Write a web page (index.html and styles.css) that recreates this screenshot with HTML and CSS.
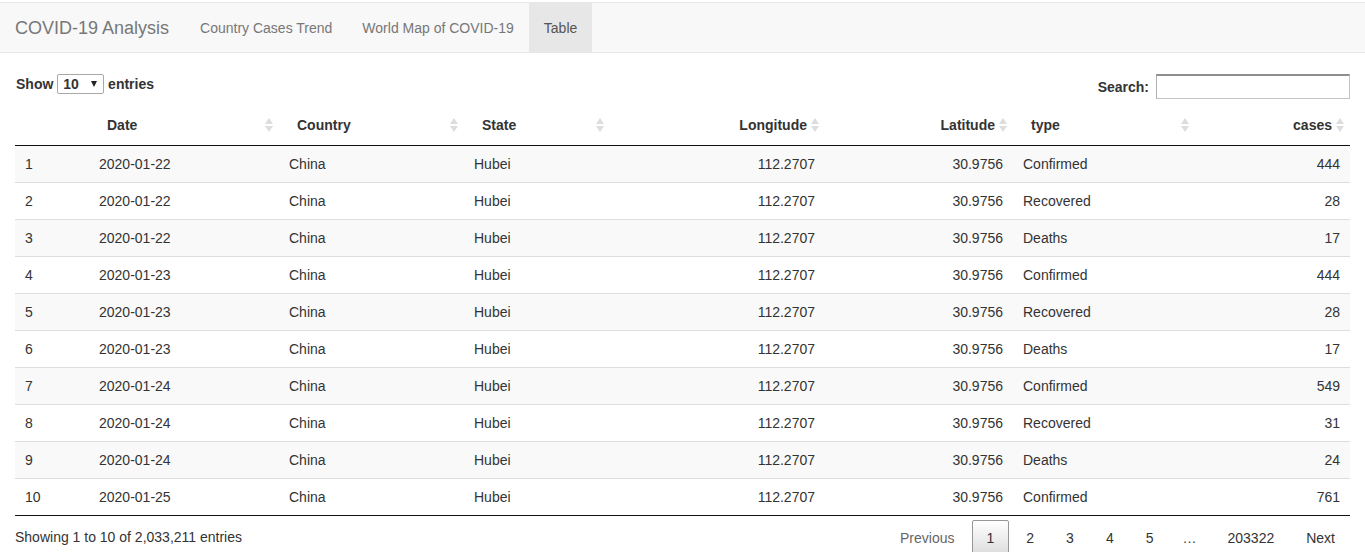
FILE: index.html
```html
<!DOCTYPE html>
<html>
<head>
<meta charset="utf-8">
<title>COVID-19 Analysis</title>
<link rel="stylesheet" href="styles.css">
</head>
<body>
<nav class="navbar">
  <span class="brand">COVID-19 Analysis</span>
  <ul class="nav">
    <li><a>Country Cases Trend</a></li>
    <li><a>World Map of COVID-19</a></li>
    <li class="active"><a>Table</a></li>
  </ul>
</nav>
<main class="content">
  <div class="dt-top">
    <div class="dt-length">Show <span class="select"><span>10</span><span class="caret"></span></span> entries</div>
    <div class="dt-filter"><span>Search:</span><span class="search-input"></span></div>
  </div>
  <table class="dt">
    <colgroup>
      <col class="c-rn"><col class="c-date"><col class="c-country"><col class="c-state"><col class="c-lon"><col class="c-lat"><col class="c-type"><col class="c-cases">
    </colgroup>
    <thead>
      <tr>
        <th></th>
        <th>Date<span class="sort"></span></th>
        <th>Country<span class="sort"></span></th>
        <th>State<span class="sort"></span></th>
        <th class="r">Longitude<span class="sort"></span></th>
        <th class="r">Latitude<span class="sort"></span></th>
        <th>type<span class="sort"></span></th>
        <th class="r">cases<span class="sort"></span></th>
      </tr>
    </thead>
    <tbody>
      <tr><td>1</td><td>2020-01-22</td><td>China</td><td>Hubei</td><td class="r">112.2707</td><td class="r">30.9756</td><td>Confirmed</td><td class="r">444</td></tr>
      <tr><td>2</td><td>2020-01-22</td><td>China</td><td>Hubei</td><td class="r">112.2707</td><td class="r">30.9756</td><td>Recovered</td><td class="r">28</td></tr>
      <tr><td>3</td><td>2020-01-22</td><td>China</td><td>Hubei</td><td class="r">112.2707</td><td class="r">30.9756</td><td>Deaths</td><td class="r">17</td></tr>
      <tr><td>4</td><td>2020-01-23</td><td>China</td><td>Hubei</td><td class="r">112.2707</td><td class="r">30.9756</td><td>Confirmed</td><td class="r">444</td></tr>
      <tr><td>5</td><td>2020-01-23</td><td>China</td><td>Hubei</td><td class="r">112.2707</td><td class="r">30.9756</td><td>Recovered</td><td class="r">28</td></tr>
      <tr><td>6</td><td>2020-01-23</td><td>China</td><td>Hubei</td><td class="r">112.2707</td><td class="r">30.9756</td><td>Deaths</td><td class="r">17</td></tr>
      <tr><td>7</td><td>2020-01-24</td><td>China</td><td>Hubei</td><td class="r">112.2707</td><td class="r">30.9756</td><td>Confirmed</td><td class="r">549</td></tr>
      <tr><td>8</td><td>2020-01-24</td><td>China</td><td>Hubei</td><td class="r">112.2707</td><td class="r">30.9756</td><td>Recovered</td><td class="r">31</td></tr>
      <tr><td>9</td><td>2020-01-24</td><td>China</td><td>Hubei</td><td class="r">112.2707</td><td class="r">30.9756</td><td>Deaths</td><td class="r">24</td></tr>
      <tr><td>10</td><td>2020-01-25</td><td>China</td><td>Hubei</td><td class="r">112.2707</td><td class="r">30.9756</td><td>Confirmed</td><td class="r">761</td></tr>
    </tbody>
  </table>
  <div class="dt-bottom">
    <div class="dt-info">Showing 1 to 10 of 2,033,211 entries</div>
    <div class="dt-paginate">
      <a class="pbtn disabled">Previous</a><a class="pbtn current">1</a><a class="pbtn">2</a><a class="pbtn">3</a><a class="pbtn">4</a><a class="pbtn">5</a><span class="ellipsis">…</span><a class="pbtn">203322</a><a class="pbtn">Next</a>
    </div>
  </div>
</main>
</body>
</html>
```

FILE: styles.css
```css
html, body {
  margin: 0;
  padding: 0;
}
body {
  font-family: "Liberation Sans", Arial, Helvetica, sans-serif;
  font-size: 14px;
  line-height: 20px;
  color: #333;
  background: #fff;
  overflow: hidden;
}

/* navbar */
.navbar {
  margin-top: 2px;
  height: 49px;
  display: flex;
  align-items: stretch;
  background: #f8f8f8;
  border-top: 1px solid #e7e7e7;
  border-bottom: 1px solid #e7e7e7;
}
.brand {
  padding: 15px 16px 14px 15px;
  font-size: 18px;
  line-height: 20px;
  color: #777;
}
.nav {
  list-style: none;
  margin: 0;
  padding: 0;
  display: flex;
}
.nav a {
  display: block;
  padding: 15px 15px 14px;
  line-height: 20px;
  color: #777;
}
.nav .active a {
  background: #e7e7e7;
  color: #555;
}

/* content */
.content {
  margin-top: 20px;
  padding: 0 15px;
}
.dt-top {
  display: flex;
  justify-content: space-between;
  align-items: flex-start;
  height: 32px;
}
.dt-length {
  font-weight: 700;
  padding-top: 1px;
  padding-left: 1px;
  white-space: pre;
}
.select {
  display: inline-flex;
  align-items: center;
  justify-content: space-between;
  box-sizing: border-box;
  width: 47px;
  height: 20px;
  padding: 0 6px 0 5px;
  border: 1px solid #a9a9a9;
  border-radius: 2px;
  vertical-align: top;
  background: #fff;
  font-weight: 700;
  line-height: 18px;
}
.caret {
  width: 0;
  height: 0;
  border-left: 3.5px solid transparent;
  border-right: 3.5px solid transparent;
  border-top: 6px solid #222;
}
.dt-filter {
  display: flex;
  align-items: center;
  gap: 7px;
  font-weight: 700;
  padding-top: 1px;
}
.search-input {
  display: block;
  box-sizing: border-box;
  width: 194px;
  height: 25px;
  border: 1px solid #c4c4c4;
  border-top: 2px solid #8f8f8f;
  border-left-color: #b0b0b0;
  background: #fff;
}

/* table */
.dt {
  width: 100%;
  table-layout: fixed;
  border-collapse: separate;
  border-spacing: 0;
  border-bottom: 1px solid #111;
}
.c-rn { width: 74px; }
.c-date { width: 190px; }
.c-country { width: 185px; }
.c-state { width: 146px; }
.c-lon { width: 215px; }
.c-lat { width: 188px; }
.c-type { width: 182px; }
.c-cases { width: 155px; }

.dt th {
  position: relative;
  padding: 10px 18px;
  font-weight: 700;
  text-align: left;
  color: #333;
  border-bottom: 1px solid #111;
  white-space: nowrap;
}
.dt th.r, .dt td.r {
  text-align: right;
}
.dt td {
  padding: 8px 10px;
  border-top: 1px solid #ddd;
  white-space: nowrap;
}
.dt tbody tr:first-child td {
  border-top: none;
}
.dt tbody tr:nth-child(odd) {
  background: #f9f9f9;
}
.sort {
  position: absolute;
  right: 6px;
  top: 50%;
  width: 8px;
  height: 14px;
  margin-top: -7px;
}
.sort::before,
.sort::after {
  content: "";
  position: absolute;
  left: 0;
  width: 0;
  height: 0;
  border-left: 4px solid transparent;
  border-right: 4px solid transparent;
}
.sort::before {
  top: 0;
  border-bottom: 6px solid #ddd;
}
.sort::after {
  bottom: 0;
  border-top: 6px solid #ddd;
}

/* bottom */
.dt-bottom {
  display: flex;
  justify-content: space-between;
  align-items: flex-start;
}
.dt-info {
  padding-top: 10.5px;
}
.dt-paginate {
  padding-top: 3.5px;
  display: flex;
}
.pbtn {
  display: block;
  box-sizing: border-box;
  min-width: 21px;
  padding: 7px 14px;
  margin-left: 2px;
  border: 1px solid transparent;
  border-radius: 2px;
  text-align: center;
  color: #333;
}
.pbtn.disabled {
  color: #666;
}
.pbtn.current {
  border-color: #979797;
  background: linear-gradient(to bottom, #fff 0%, #dcdcdc 100%);
}
.ellipsis {
  display: block;
  padding: 8px 14px 0;
  color: #333;
}
```
